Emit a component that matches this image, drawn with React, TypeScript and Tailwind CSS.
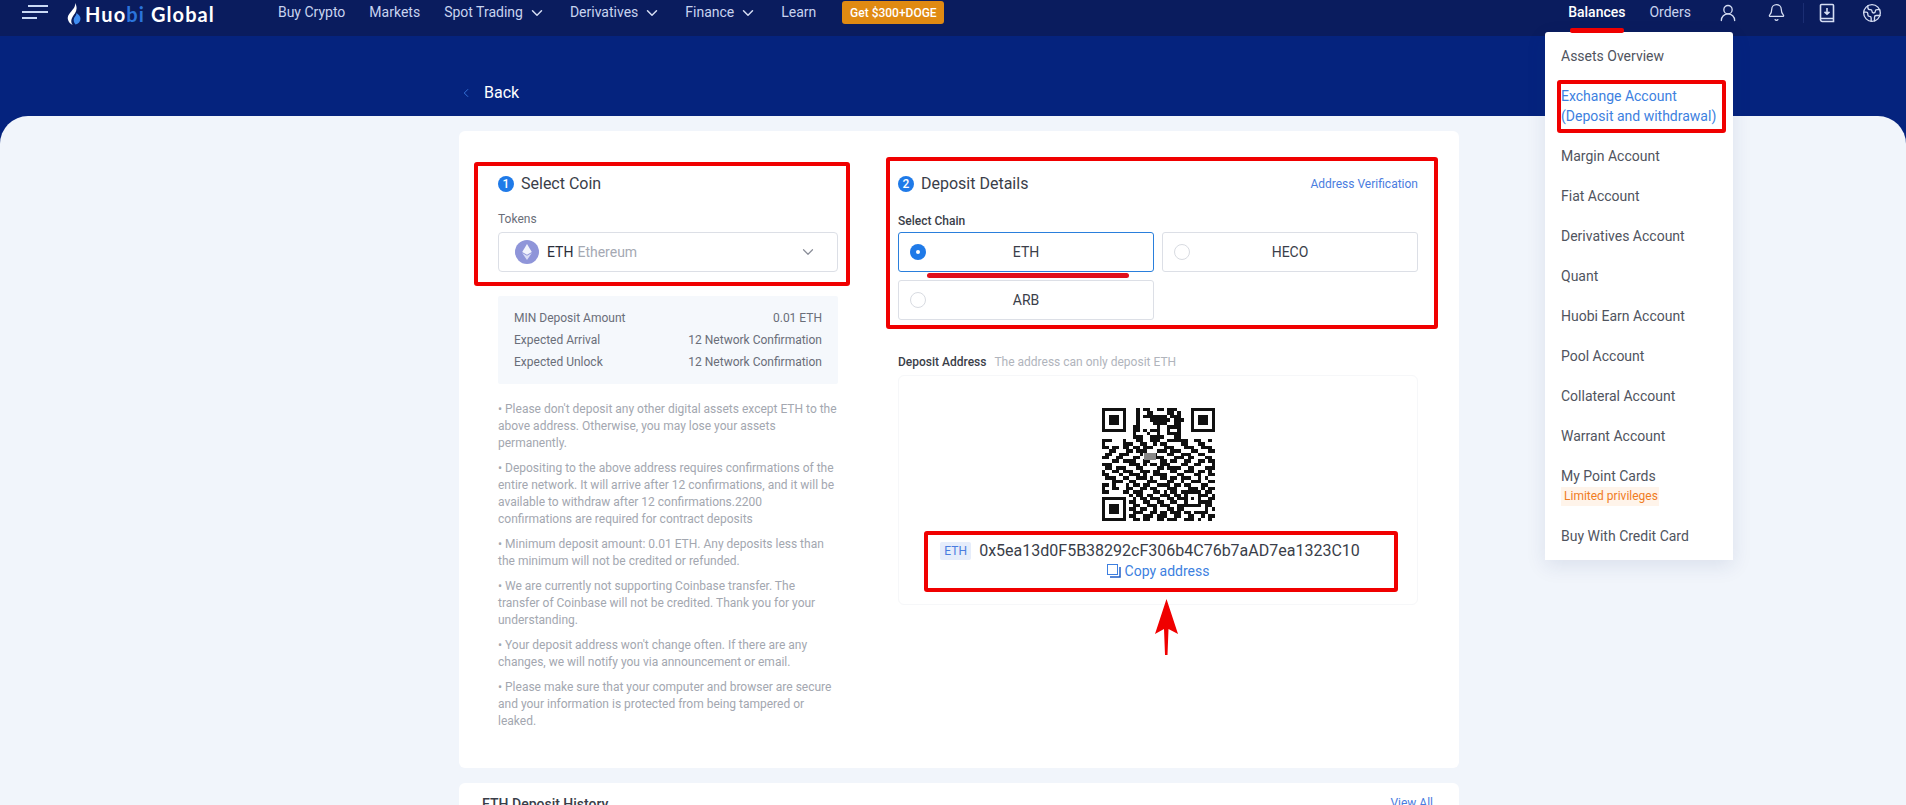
import React from 'react';
import { Bell, ChevronDown, ChevronLeft, Earth, UserRound } from 'lucide-react';

const qrRows = [
  '111111100010110011011100001111111',
  '100000100010011000011010001000001',
  '101110100010111111101110001011101',
  '101110100010001111110111001011101',
  '101110100010000111100110001011101',
  '100000100110000010011110001000001',
  '111111100110101110010010001111111',
  '000000000100010010011110000000000',
  '000000000111001111000110000000000',
  '111000100011001110011111100110010',
  '100000111001100101100001100011000',
  '110110110110111000111000111001110',
  '001100011011100011101110001100011',
  '011001110001011100011001110011000',
  '110011000110010111000111011000110',
  '000110111100110001101100110011011',
  '111000001110101101110001100110001',
  '011011100011000011011110011000111',
  '100110111001110110001100111011010',
  '110001001110100111100011000110011',
  '011100110011101001101101110010100',
  '000111001100011100011001001110011',
  '110100010110110011110110110001100',
  '100110011001101100011100011101011',
  '110000110111000110101101111110110',
  '000000001011011001110110100011101',
  '111111100101101110011011101010011',
  '100000101100110011001100100011110',
  '101110100110011101110011111110110',
  '101110101101100100011011000000101',
  '101110100111001101101110110111100',
  '100000101100111011100110011001011',
  '111111100110110011011100111010010',
];

function QrCode() {
  return (
    <svg width="113" height="113" viewBox="0 0 33 33" shapeRendering="crispEdges">
      <rect width="33" height="33" fill="#fff" />
      {qrRows.map((row, y) =>
        row.split('').map((cell, x) => (cell === '1' ? <rect key={`${x}-${y}`} x={x} y={y} width="1" height="1" fill="#111" /> : null))
      )}
      <rect x="12.3" y="13.2" width="3.6" height="2" fill="#888" />
    </svg>
  );
}

function Logo() {
  return (
    <div className="flex items-center">
      <svg width="14" height="22" viewBox="0 0 14 22">
        <path d="M8 0c.6 3.4-1.2 5.2-3.4 8C2.400 10.800 0 13 1 16.800 1.700 19.500 3.500 21 5.600 22 3.600 19.200 4 16.500 5.500 14 7 11.500 9.400 9 9.600 5.500 9.700 3.500 9 1.500 8 0z" fill="#fff" />
        <path d="M9.500 10c.2 1.800-1.500 3-2.400 5-.9 2-.4 4.800 1.500 6.600 2.700-.8 4.900-2.900 4.900-5.900 0-2.500-1.900-4.100-4-5.700z" fill="#3f8cf0" />
      </svg>
      <span className="ml-[4px] font-[Lato,sans-serif] text-[20px] font-bold leading-[24px] tracking-[1.1px] text-white">
        Huo<span className="text-[#2b74dc]">bi</span> Global
      </span>
    </div>
  );
}

function NavItem({ label, arrow }: { label: string; arrow?: boolean }) {
  return (
    <div className="flex items-center gap-[5px] text-[14px] text-[#c8d3ef]">
      <span>{label}</span>
      {arrow && <ChevronDown size={18} strokeWidth={2} className="text-[#d5ddf3]" />}
    </div>
  );
}

function Header() {
  return (
    <header className="flex h-[36px] items-start bg-[#0a1c5e]">
      <div className="ml-[22px] mt-[5px] flex w-[26px] flex-col items-end gap-[4px]">
        <span className="h-[2px] w-[20px] bg-[#c9d9f5]" />
        <span className="h-[2px] w-[26px] bg-[#c9d9f5]" />
        <span className="mr-[11px] h-[2px] w-[15px] bg-[#c9d9f5]" />
      </div>
      <div className="ml-[19px] mt-[2px]">
        <Logo />
      </div>
      <nav className="ml-[63px] mt-[2px] flex h-[21px] items-center">
        <div className="flex items-center gap-[24px]">
          <NavItem label="Buy Crypto" />
          <NavItem label="Markets" />
          <NavItem label="Spot Trading" arrow />
          <NavItem label="Derivatives" arrow />
          <NavItem label="Finance" arrow />
          <NavItem label="Learn" />
        </div>
        <div className="ml-[26px] flex h-[23px] w-[102px] items-center justify-center rounded-[3px] bg-[#e08a12] text-[12px] font-medium text-white">
          Get $300+DOGE
        </div>
      </nav>
      <div className="ml-auto mr-[24px] mt-[2px] flex h-[21px] items-center text-[14px]">
        <span className="font-medium text-white">Balances</span>
        <span className="ml-[24px] text-[#c8d3ef]">Orders</span>
        <UserRound size={20} strokeWidth={1.6} className="ml-[27px] text-[#d5ddf3]" />
        <Bell size={19} strokeWidth={1.6} className="ml-[29px] text-[#d5ddf3]" />
        <span className="ml-[17px] h-[20px] w-px bg-[#1b2e73]" />
        <svg className="ml-[15px]" width="16" height="20" viewBox="0 0 16 20" fill="none" stroke="#d5ddf3" strokeWidth="1.6">
          <path d="M1.500 16V2.500a1 1 0 0 1 1-1h11a1 1 0 0 1 1 1V18.500H3.500a2 2 0 0 1-2-2.500z" />
          <path d="M2 15.500h12.500M8 5v6M5.500 8.800 8 11.200l2.500-2.400" />
        </svg>
        <Earth size={20} strokeWidth={1.6} className="ml-[27px] text-[#d5ddf3]" />
      </div>
    </header>
  );
}

function StepTitle({ step, title }: { step: number; title: string }) {
  return (
    <div className="flex h-[24px] items-center gap-[7px]">
      <span className="flex h-[16px] w-[16px] items-center justify-center rounded-full bg-[#1f7ae8] text-[12px] font-medium leading-none text-white">{step}</span>
      <span className="text-[16px] text-[#3a3e49]">{title}</span>
    </div>
  );
}

function InfoRow({ label, value }: { label: string; value: string }) {
  return (
    <div className="flex h-[22px] items-center justify-between">
      <span>{label}</span>
      <span>{value}</span>
    </div>
  );
}

function SelectCoin() {
  return (
    <div className="w-[340px] shrink-0 pt-[41px]">
      <StepTitle step={1} title="Select Coin" />
      <div className="mt-[15px] h-[16px] text-[12px] leading-[16px] text-[#6a6e79]">Tokens</div>
      <div className="mt-[5px] flex h-[40px] items-center rounded-[4px] border border-[#dcdfe6] pl-[16px] pr-[20px]">
        <svg width="24" height="24" viewBox="0 0 24 24">
          <circle cx="12" cy="12" r="12" fill="#8f95d9" />
          <path d="M12 4l-4.800 8 4.800 2.800 4.800-2.800z" fill="#f2f3fc" />
          <path d="M7.200 13 12 20l4.800-7-4.800 2.800z" fill="#d9dcf5" />
        </svg>
        <span className="ml-[8px] text-[14px] text-[#2a2e3a]">ETH</span>
        <span className="ml-[4px] text-[14px] text-[#a5a9b3]">Ethereum</span>
        <ChevronDown size={18} strokeWidth={1.6} className="ml-auto text-[#8a8e99]" />
      </div>
      <div className="mt-[24px] rounded-[2px] bg-[#f5f8fc] px-[16px] py-[11px] text-[12px] text-[#6a6e79]">
        <InfoRow label="MIN Deposit Amount" value="0.01 ETH" />
        <InfoRow label="Expected Arrival" value="12 Network Confirmation" />
        <InfoRow label="Expected Unlock" value="12 Network Confirmation" />
      </div>
      <div className="mt-[17px] flex flex-col gap-[8px] text-[12px] leading-[17px] text-[#a3a7b0]">
        <p>• Please don't deposit any other digital assets except ETH to the above address. Otherwise, you may lose your assets permanently.</p>
        <p>• Depositing to the above address requires confirmations of the entire network. It will arrive after 12 confirmations, and it will be available to withdraw after 12 confirmations.2200 confirmations are required for contract deposits</p>
        <p>• Minimum deposit amount: 0.01 ETH. Any deposits less than the minimum will not be credited or refunded.</p>
        <p>• We are currently not supporting Coinbase transfer. The transfer of Coinbase will not be credited. Thank you for your understanding.</p>
        <p>• Your deposit address won't change often. If there are any changes, we will notify you via announcement or email.</p>
        <p>• Please make sure that your computer and browser are secure and your information is protected from being tampered or leaked.</p>
      </div>
    </div>
  );
}

function ChainButton({ label, active }: { label: string; active?: boolean }) {
  return (
    <div className={`relative flex h-[40px] items-center justify-center rounded-[3px] border text-[14px] text-[#3a3e49] ${active ? 'border-[#2a7fdc]' : 'border-[#dcdfe6]'}`}>
      {active ? (
        <span className="absolute left-[11px] flex h-[16px] w-[16px] items-center justify-center rounded-full bg-[#1f7ae8]">
          <span className="h-[4px] w-[4px] rounded-full bg-white" />
        </span>
      ) : (
        <span className="absolute left-[11px] h-[16px] w-[16px] rounded-full border border-[#d8dbe1]" />
      )}
      {label}
    </div>
  );
}

function DepositDetails() {
  return (
    <div className="ml-[60px] w-[520px] shrink-0 pt-[41px]">
      <div className="flex items-center justify-between">
        <StepTitle step={2} title="Deposit Details" />
        <span className="text-[12px] text-[#4a7de0]">Address Verification</span>
      </div>
      <div className="mt-[17px] h-[16px] text-[12px] font-medium leading-[16px] text-[#3a3e49]">Select Chain</div>
      <div className="mt-[3px] grid grid-cols-2 gap-x-[8px] gap-y-[8px]">
        <ChainButton label="ETH" active />
        <ChainButton label="HECO" />
        <ChainButton label="ARB" />
      </div>
      <div className="mt-[34px] flex h-[16px] items-center text-[12px] leading-[16px]">
        <span className="font-medium text-[#3a3e49]">Deposit Address</span>
        <span className="ml-[8px] text-[#b0b4bc]">The address can only deposit ETH</span>
      </div>
      <div className="mt-[5px] flex h-[230px] flex-col items-center rounded-[6px] border border-[#f6f7f9] pt-[32px]">
        <QrCode />
        <div className="mr-[16px] mt-[20px] flex h-[20px] items-center">
          <span className="flex h-[18px] w-[31px] items-center justify-center rounded-[2px] bg-[#e6edfb] text-[12px] text-[#4a7de0]">ETH</span>
          <span className="ml-[8px] text-[16px] text-[#3a3e49]">0x5ea13d0F5B38292cF306b4C76b7aAD7ea1323C10</span>
        </div>
        <div className="flex h-[20px] items-center gap-[4px] text-[14px] text-[#3d7fe0]">
          <svg width="14" height="14" viewBox="0 0 14 14" fill="none">
            <rect x="0.500" y="0.500" width="10" height="10" stroke="#3d7fe0" />
            <path d="M13 3v10H3" stroke="#1f5fc8" strokeWidth="1.500" />
          </svg>
          Copy address
        </div>
      </div>
    </div>
  );
}

const menuItems = ['Margin Account', 'Fiat Account', 'Derivatives Account', 'Quant', 'Huobi Earn Account', 'Pool Account', 'Collateral Account', 'Warrant Account'];

function BalancesMenu() {
  return (
    <div className="absolute left-[1545px] top-[32px] w-[188px] rounded-t-[3px] bg-white pb-[4px] pl-[16px] pt-[4px] text-[14px] leading-[20px] text-[#50545e] shadow-[0_6px_20px_rgba(30,50,110,0.1)]">
      <div className="py-[10px]">Assets Overview</div>
      <div className="py-[10px] text-[#3d7fe0]">
        Exchange Account
        <br />
        (Deposit and withdrawal)
      </div>
      {menuItems.map((item) => (
        <div key={item} className="py-[10px]">{item}</div>
      ))}
      <div className="py-[10px]">
        My Point Cards
        <div className="mt-[1px] h-[19px] w-[98px] bg-[#fff4ea] pl-[3px] text-[12px] leading-[19px] text-[#f07c1e]">Limited privileges</div>
      </div>
      <div className="py-[10px]">Buy With Credit Card</div>
    </div>
  );
}

// red marks drawn on top of the screenshot
function Annotations() {
  return (
    <>
      <div className="absolute left-[474px] top-[162px] h-[124px] w-[376px] rounded-[3px] border-[4px] border-[#f00000]" />
      <div className="absolute left-[886px] top-[157px] h-[172px] w-[552px] rounded-[3px] border-[4px] border-[#f00000]" />
      <div className="absolute left-[924px] top-[531px] h-[61px] w-[474px] rounded-[3px] border-[4px] border-[#f00000]" />
      <div className="absolute left-[1557px] top-[80px] h-[53px] w-[169px] rounded-[3px] border-[4px] border-[#f00000]" />
      <div className="absolute left-[1570px] top-[28px] h-[5px] w-[54px] rounded-[2px] bg-[#f00000]" />
      <div className="absolute left-[927px] top-[273px] h-[5px] w-[202px] rounded-full bg-[#e0101c]" />
      <svg className="absolute left-[1155px] top-[598px]" width="24" height="58" viewBox="0 0 24 58">
        <path d="M11.500 1 23 36l-9.500-5-1 26h-2.500l-1-26L0 36z" fill="#f00000" />
      </svg>
    </>
  );
}

export default function App() {
  return (
    <div className="relative h-[805px] w-[1906px] overflow-hidden bg-[#05237e] font-[Roboto,sans-serif]">
      <Header />
      <div className="flex h-[80px] items-start pl-[459px] pt-[45px]">
        <ChevronLeft size={14} strokeWidth={1.5} className="mt-[5px] text-[#3b7ae0]" />
        <span className="ml-[11px] text-[16px] leading-[24px] text-white">Back</span>
      </div>
      <main className="h-[689px] rounded-t-[28px] bg-[#f1f5fb] pt-[15px]">
        <div className="ml-[459px] w-[1000px]">
          <section className="flex h-[637px] rounded-[6px] bg-white pl-[39px]">
            <SelectCoin />
            <DepositDetails />
          </section>
          <section className="mt-[15px] flex h-[80px] items-start justify-between rounded-t-[6px] bg-white pl-[23px] pr-[26px] pt-[11px]">
            <span className="text-[14px] font-medium text-[#3a3e49]">ETH Deposit History</span>
            <span className="text-[12px] text-[#4a7de0]">View All</span>
          </section>
        </div>
      </main>
      <BalancesMenu />
      <Annotations />
    </div>
  );
}
